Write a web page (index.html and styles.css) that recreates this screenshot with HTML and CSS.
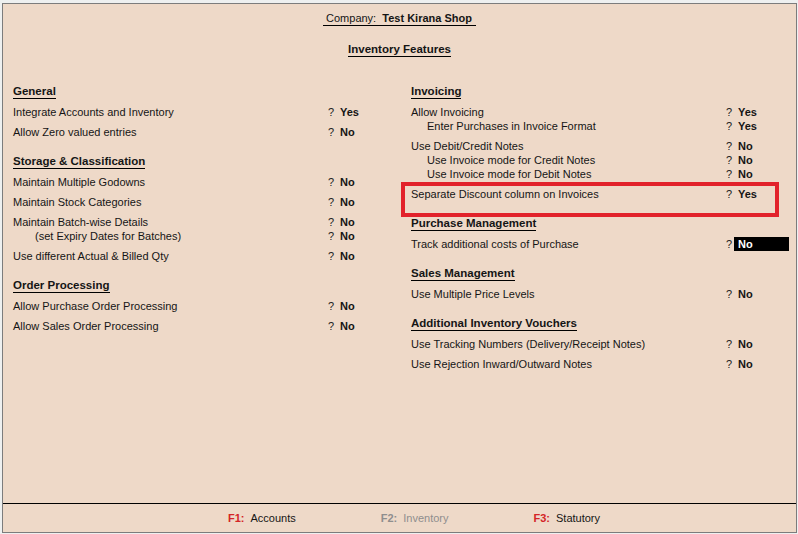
FILE: index.html
```html
<!DOCTYPE html>
<html>
<head>
<meta charset="utf-8">
<title>Inventory Features</title>
<link rel="stylesheet" href="styles.css">
</head>
<body>
<div class="topstrip"><span>Calculator</span></div>
<div class="frame">
  <div class="main">
    <div class="header">
      <div class="company">Company:&nbsp; <b>Test Kirana Shop</b></div>
      <div class="title">Inventory Features</div>
    </div>
    <div class="cols">
      <div class="col">
        <section class="sec">
          <h2 class="sec-head">General</h2>
          <div class="row"><span class="label">Integrate Accounts and Inventory</span><span class="q">?</span><span class="val">Yes</span></div>
          <div class="row"><span class="label">Allow Zero valued entries</span><span class="q">?</span><span class="val">No</span></div>
        </section>
        <section class="sec">
          <h2 class="sec-head">Storage &amp; Classification</h2>
          <div class="row"><span class="label">Maintain Multiple Godowns</span><span class="q">?</span><span class="val">No</span></div>
          <div class="row"><span class="label">Maintain Stock Categories</span><span class="q">?</span><span class="val">No</span></div>
          <div class="row"><span class="label">Maintain Batch-wise Details</span><span class="q">?</span><span class="val">No</span></div>
          <div class="row sub"><span class="label indent-wide">(set Expiry Dates for Batches)</span><span class="q">?</span><span class="val">No</span></div>
          <div class="row"><span class="label">Use different Actual &amp; Billed Qty</span><span class="q">?</span><span class="val">No</span></div>
        </section>
        <section class="sec">
          <h2 class="sec-head">Order Processing</h2>
          <div class="row"><span class="label">Allow Purchase Order Processing</span><span class="q">?</span><span class="val">No</span></div>
          <div class="row"><span class="label">Allow Sales Order Processing</span><span class="q">?</span><span class="val">No</span></div>
        </section>
      </div>
      <div class="col">
        <section class="sec">
          <h2 class="sec-head">Invoicing</h2>
          <div class="row"><span class="label">Allow Invoicing</span><span class="q">?</span><span class="val">Yes</span></div>
          <div class="row sub"><span class="label indent">Enter Purchases in Invoice Format</span><span class="q">?</span><span class="val">Yes</span></div>
          <div class="row"><span class="label">Use Debit/Credit Notes</span><span class="q">?</span><span class="val">No</span></div>
          <div class="row sub"><span class="label indent">Use Invoice mode for Credit Notes</span><span class="q">?</span><span class="val">No</span></div>
          <div class="row sub"><span class="label indent">Use Invoice mode for Debit Notes</span><span class="q">?</span><span class="val">No</span></div>
          <div class="row marked"><span class="label">Separate Discount column on Invoices</span><span class="q">?</span><span class="val">Yes</span></div>
        </section>
        <section class="sec">
          <h2 class="sec-head">Purchase Management</h2>
          <div class="row"><span class="label">Track additional costs of Purchase</span><span class="q">?</span><span class="val active">No</span></div>
        </section>
        <section class="sec">
          <h2 class="sec-head">Sales Management</h2>
          <div class="row"><span class="label">Use Multiple Price Levels</span><span class="q">?</span><span class="val">No</span></div>
        </section>
        <section class="sec">
          <h2 class="sec-head">Additional Inventory Vouchers</h2>
          <div class="row"><span class="label">Use Tracking Numbers (Delivery/Receipt Notes)</span><span class="q">?</span><span class="val">No</span></div>
          <div class="row"><span class="label">Use Rejection Inward/Outward Notes</span><span class="q">?</span><span class="val">No</span></div>
        </section>
      </div>
    </div>
  </div>
  <div class="footer">
    <div class="fkey"><span class="key">F1:</span><span class="klabel">Accounts</span></div>
    <div class="fkey disabled"><span class="key">F2:</span><span class="klabel">Inventory</span></div>
    <div class="fkey"><span class="key">F3:</span><span class="klabel">Statutory</span></div>
  </div>
</div>
</body>
</html>
```

FILE: styles.css
```css
* { box-sizing: border-box; }

html, body {
  margin: 0;
  padding: 0;
}

body {
  width: 798px;
  height: 534px;
  overflow: hidden;
  background: #eef0f0;
  font-family: "Liberation Sans", Arial, sans-serif;
  font-size: 11px;
  color: #151515;
}

.topstrip {
  height: 3px;
  overflow: hidden;
  padding-left: 210px;
}

.topstrip span {
  display: block;
  margin-top: -10px;
  line-height: 13px;
  font-weight: bold;
  color: #b4bcc0;
}

.frame {
  margin: 0 1px 0 2px;
  height: 530px;
  border: 1px solid #7c7c7c;
  background: #eed9c8;
  display: flex;
  flex-direction: column;
}

.main {
  flex: 1;
  padding: 7px 0 0 10px;
}

.header {
  display: flex;
  flex-direction: column;
  align-items: center;
  padding-right: 10px;
}

.company {
  line-height: 14px;
  padding: 0 4px 0 3px;
  border-bottom: 1px solid #000;
}

.company b { font-weight: bold; }

.title {
  margin-top: 16px;
  font-size: 11.5px;
  line-height: 14px;
  font-weight: bold;
  border-bottom: 1px solid #000;
}

.cols {
  margin-top: 27px;
  display: grid;
  grid-template-columns: 398px 1fr;
}

.sec + .sec { margin-top: 15px; }

.sec-head {
  display: inline-block;
  margin: 0;
  font-size: 11.5px;
  font-weight: bold;
  line-height: 14px;
  border-bottom: 1px solid #000;
}

.row {
  position: relative;
  display: flex;
  line-height: 14px;
  height: 14px;
  margin-top: 6px;
  white-space: nowrap;
}

.row.sub { margin-top: 0; }

.label {
  flex: none;
  width: 315px;
}

.label.indent { padding-left: 16px; }
.label.indent-wide { padding-left: 22px; }

.q {
  flex: none;
  width: 12px;
  color: #222;
}

.val {
  font-weight: bold;
}

.val.active {
  width: 55px;
  margin-left: -4px;
  padding-left: 4px;
  background: #000;
  color: #fff;
}

.row.marked::after {
  content: "";
  position: absolute;
  left: -10px;
  top: -5px;
  width: 370px;
  height: 27px;
  border: 4px solid #e2222b;
}

.footer {
  flex: none;
  height: 29px;
  border-top: 1px solid #000;
  display: flex;
  align-items: center;
  gap: 85px;
  padding-left: 225px;
}

.key {
  font-weight: bold;
  color: #d42426;
  margin-right: 6px;
}

.fkey.disabled .key,
.fkey.disabled .klabel {
  color: #8e8e8e;
}
```
